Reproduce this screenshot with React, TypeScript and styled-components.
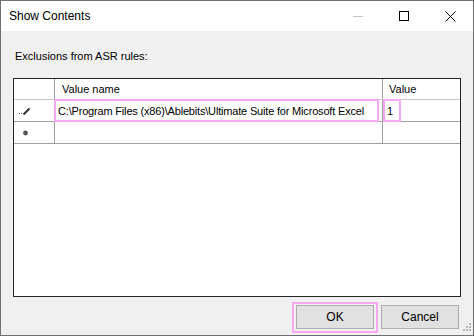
import styled, { createGlobalStyle } from 'styled-components';

const GlobalStyle = createGlobalStyle`
  html, body {
    margin: 0;
    padding: 0;
    background: #ffffff;
  }
  * {
    box-sizing: border-box;
  }
`;

const Window = styled.div`
  width: 474px;
  height: 336px;
  border: 1px solid #6f6f6f;
  display: flex;
  flex-direction: column;
  font-family: 'Liberation Sans', Arial, sans-serif;
  color: #000;
  position: relative;
`;

const TitleBar = styled.div`
  height: 30px;
  background: #ffffff;
  display: flex;
  align-items: center;
`;

const Title = styled.div`
  flex: 1;
  padding-left: 8px;
  font-size: 12px;
`;

const CaptionButton = styled.div`
  width: 46px;
  height: 30px;
  display: flex;
  align-items: center;
  justify-content: center;
`;

const Body = styled.div`
  flex: 1;
  background: #f0f0f0;
  padding: 19px 14px 6px 12px;
  display: flex;
  flex-direction: column;
  font-size: 11px;
`;

const Label = styled.div`
  line-height: 13px;
  height: 13px;
  padding-left: 2px;
  margin-bottom: 15px;
`;

const Grid = styled.div`
  height: 219px;
  width: 448px;
  border: 1px solid #262626;
  background: #ffffff;
  display: flex;
  flex-direction: column;
  position: relative;
`;

const Row = styled.div<{ $header?: boolean }>`
  display: flex;
  height: ${({ $header }) => ($header ? '21px' : '22px')};
  border-bottom: 1px solid ${({ $header }) => ($header ? '#c8c8c8' : '#a0a0a0')};
`;

const Cell = styled.div<{ $width: number; $pad: number; $last?: boolean; $tight?: boolean }>`
  width: ${({ $width }) => $width}px;
  flex: ${({ $last }) => ($last ? 1 : 'none')};
  padding-left: ${({ $pad }) => $pad}px;
  display: flex;
  align-items: center;
  border-right: ${({ $last }) => ($last ? 'none' : '1px solid #a0a0a0')};
  letter-spacing: ${({ $tight }) => ($tight ? '-0.18px' : 'normal')};
  white-space: nowrap;
  overflow: hidden;
`;

const Highlight = styled.div<{ $x: number; $y: number; $w: number; $h: number }>`
  position: absolute;
  left: ${({ $x }) => $x}px;
  top: ${({ $y }) => $y}px;
  width: ${({ $w }) => $w}px;
  height: ${({ $h }) => $h}px;
  border: 2px solid #f7a8f1;
  pointer-events: none;
`;

const Footer = styled.div`
  margin-top: 8px;
  display: flex;
  justify-content: flex-end;
  gap: 7px;
`;

const Button = styled.div`
  width: 78px;
  height: 24px;
  background: #e1e1e1;
  border: 1px solid #adadad;
  display: flex;
  align-items: center;
  justify-content: center;
  font-size: 12px;
`;

const Grip = styled.svg`
  position: absolute;
  right: 1px;
  bottom: 1px;
`;

const Pencil = () => (
  <svg width="20" height="20" viewBox="0 0 20 20">
    <rect x="5" y="12" width="1" height="1" fill="#606060" />
    <rect x="7" y="12" width="1" height="1" fill="#606060" />
    <path d="M9.5 13.5 L15.5 7.5" stroke="#303030" strokeWidth="2" />
  </svg>
);

const NewRowMark = () => (
  <svg width="20" height="20" viewBox="0 0 20 20">
    <circle cx="11.5" cy="10" r="2.4" fill="#555555" />
  </svg>
);

export default function App() {
  return (
    <>
      <GlobalStyle />
      <Window>
        <TitleBar>
          <Title>Show Contents</Title>
          <CaptionButton>
            <svg width="10" height="10" viewBox="0 0 10 10">
              <path d="M0 5.5 H10" stroke="#c4c4c4" strokeWidth="1" />
            </svg>
          </CaptionButton>
          <CaptionButton>
            <svg width="10" height="10" viewBox="0 0 10 10">
              <rect x="0.5" y="0.5" width="9" height="9" fill="none" stroke="#000" strokeWidth="1" />
            </svg>
          </CaptionButton>
          <CaptionButton>
            <svg width="11" height="11" viewBox="0 0 11 11">
              <path d="M0.5 0.5 L10.5 10.5 M10.5 0.5 L0.5 10.5" stroke="#000" strokeWidth="1" />
            </svg>
          </CaptionButton>
        </TitleBar>
        <Body>
          <Label>Exclusions from ASR rules:</Label>
          <Grid>
            <Row $header>
              <Cell $width={41} $pad={0} />
              <Cell $width={328} $pad={7}>Value name</Cell>
              <Cell $width={77} $pad={6} $last>Value</Cell>
            </Row>
            <Row>
              <Cell $width={41} $pad={0}>
                <Pencil />
              </Cell>
              <Cell $width={328} $pad={3} $tight>
                C:\Program Files (x86)\Ablebits\Ultimate Suite for Microsoft Excel
              </Cell>
              <Cell $width={77} $pad={4} $last>1</Cell>
            </Row>
            <Row>
              <Cell $width={41} $pad={0}>
                <NewRowMark />
              </Cell>
              <Cell $width={328} $pad={3} />
              <Cell $width={77} $pad={4} $last />
            </Row>
            <Highlight $x={40} $y={20} $w={325} $h={23} />
            <Highlight $x={369} $y={20} $w={18} $h={23} />
          </Grid>
          <Footer>
            <Button>OK</Button>
            <Button>Cancel</Button>
          </Footer>
          <Highlight $x={291} $y={301} $w={86} $h={31} />
        </Body>
        <Grip width="12" height="12" viewBox="0 0 12 12">
          {[
            [9, 1],
            [6, 4],
            [9, 4],
            [3, 7],
            [6, 7],
            [9, 7],
          ].map(([x, y], i) => (
            <rect key={i} x={x} y={y} width="2" height="2" fill="#b8b8b8" />
          ))}
        </Grip>
      </Window>
    </>
  );
}
